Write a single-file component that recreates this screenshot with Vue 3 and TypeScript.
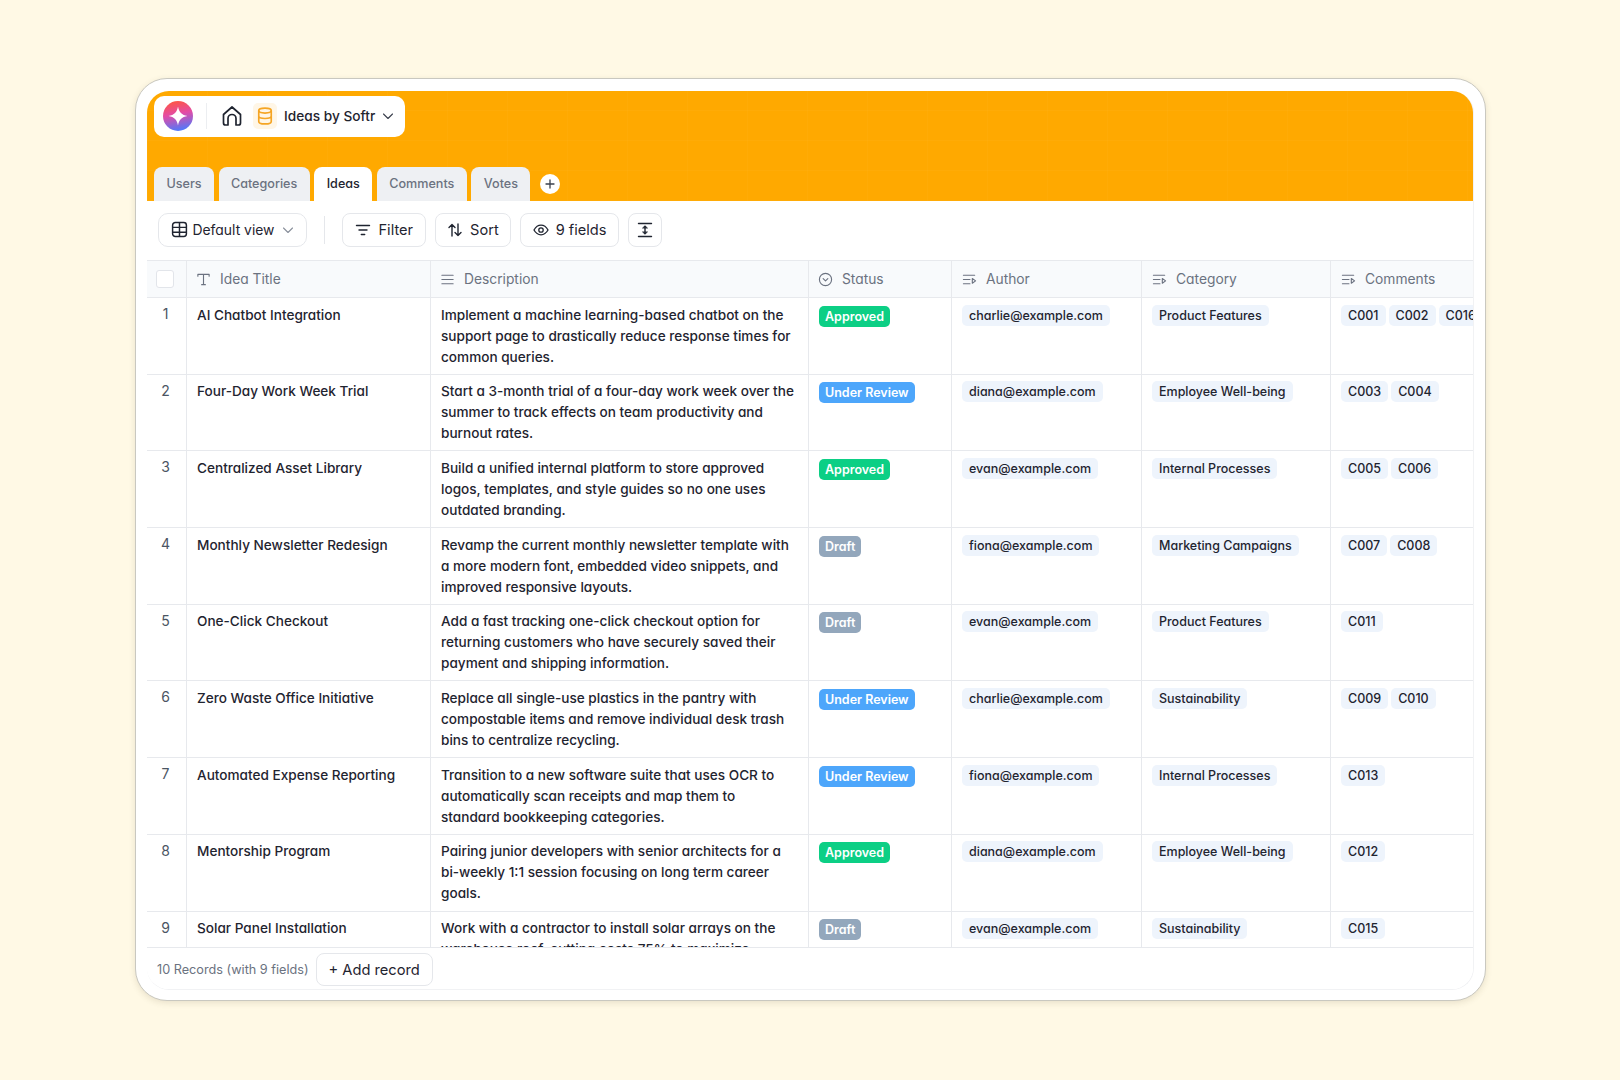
<script setup lang="ts">
interface Idea {
  title: string
  desc: string
  status: 'Approved' | 'Under Review' | 'Draft'
  author: string
  category: string
  comments: string[]
}

const tabs = ['Users', 'Categories', 'Ideas', 'Comments', 'Votes']

const ideas: Idea[] = [
  { title: 'AI Chatbot Integration', desc: 'Implement a machine learning-based chatbot on the support page to drastically reduce response times for common queries.', status: 'Approved', author: 'charlie@example.com', category: 'Product Features', comments: ['C001', 'C002', 'C016'] },
  { title: 'Four-Day Work Week Trial', desc: 'Start a 3-month trial of a four-day work week over the summer to track effects on team productivity and burnout rates.', status: 'Under Review', author: 'diana@example.com', category: 'Employee Well-being', comments: ['C003', 'C004'] },
  { title: 'Centralized Asset Library', desc: 'Build a unified internal platform to store approved logos, templates, and style guides so no one uses outdated branding.', status: 'Approved', author: 'evan@example.com', category: 'Internal Processes', comments: ['C005', 'C006'] },
  { title: 'Monthly Newsletter Redesign', desc: 'Revamp the current monthly newsletter template with a more modern font, embedded video snippets, and improved responsive layouts.', status: 'Draft', author: 'fiona@example.com', category: 'Marketing Campaigns', comments: ['C007', 'C008'] },
  { title: 'One-Click Checkout', desc: 'Add a fast tracking one-click checkout option for returning customers who have securely saved their payment and shipping information.', status: 'Draft', author: 'evan@example.com', category: 'Product Features', comments: ['C011'] },
  { title: 'Zero Waste Office Initiative', desc: 'Replace all single-use plastics in the pantry with compostable items and remove individual desk trash bins to centralize recycling.', status: 'Under Review', author: 'charlie@example.com', category: 'Sustainability', comments: ['C009', 'C010'] },
  { title: 'Automated Expense Reporting', desc: 'Transition to a new software suite that uses OCR to automatically scan receipts and map them to standard bookkeeping categories.', status: 'Under Review', author: 'fiona@example.com', category: 'Internal Processes', comments: ['C013'] },
  { title: 'Mentorship Program', desc: 'Pairing junior developers with senior architects for a bi-weekly 1:1 session focusing on long term career goals.', status: 'Approved', author: 'diana@example.com', category: 'Employee Well-being', comments: ['C012'] },
  { title: 'Solar Panel Installation', desc: 'Work with a contractor to install solar arrays on the warehouse roof, cutting costs 75% to maximize energy.', status: 'Draft', author: 'evan@example.com', category: 'Sustainability', comments: ['C015'] },
]

const statusClass = (s: Idea['status']) => 'status--' + s.split(' ')[0].toLowerCase()
</script>

<template>
  <div class="page">
    <div class="frame">
      <div class="app">
        <header class="banner">
          <div class="pill">
            <svg class="logo" viewBox="0 0 30 30" width="30" height="30">
              <defs>
                <linearGradient id="lg" x1="0.3" y1="0" x2="0.5" y2="1">
                  <stop offset="0" stop-color="#ff5640" />
                  <stop offset="0.45" stop-color="#e34ca6" />
                  <stop offset="1" stop-color="#4f79fb" />
                </linearGradient>
              </defs>
              <circle cx="15" cy="15" r="15" fill="url(#lg)" />
              <path d="M15 5.500c1 5.800 3.700 8.500 9.500 9.500-5.800 1-8.500 3.700-9.500 9.500-1-5.800-3.700-8.500-9.500-9.500 5.800-1 8.500-3.700 9.500-9.500z" fill="#fff" />
            </svg>
            <span class="pill-sep"></span>
            <svg class="home" viewBox="0 0 24 24" width="24" height="24" fill="none" stroke="#1f2430" stroke-width="1.700" stroke-linecap="round" stroke-linejoin="round">
              <path d="M3.500 10.500 12 3l8.500 7.500V19a2 2 0 0 1-2 2H16v-6.500a4 4 0 0 0-8 0V21H5.500a2 2 0 0 1-2-2z" />
            </svg>
            <span class="db-box">
              <svg viewBox="0 0 24 24" width="20" height="20" fill="none" stroke="#f5a524" stroke-width="2">
                <ellipse cx="12" cy="5.500" rx="7.500" ry="3" />
                <path d="M4.500 5.500v13c0 1.700 3.400 3 7.500 3s7.500-1.300 7.500-3v-13M4.500 12c0 1.700 3.400 3 7.500 3s7.500-1.300 7.500-3" />
              </svg>
            </span>
            <span class="pill-title">Ideas by Softr</span>
            <svg class="chev" viewBox="0 0 12 12" width="12" height="12" fill="none" stroke="#3a404d" stroke-width="1.100" stroke-linecap="round" stroke-linejoin="round"><path d="m1.500 4 4.500 4.500L10.500 4" /></svg>
          </div>
          <nav class="tabs">
            <span v-for="t in tabs" :key="t" class="tab" :class="{ 'tab--active': t === 'Ideas' }">{{ t }}</span>
            <span class="tab-add">
              <svg viewBox="0 0 10 10" width="10" height="10" fill="none" stroke="#3a404d" stroke-width="1.300" stroke-linecap="round"><path d="M5 1v8M1 5h8" /></svg>
            </span>
          </nav>
        </header>

        <div class="toolbar">
          <button class="btn btn--view">
            <svg viewBox="0 0 16 16" width="17" height="17" fill="none" stroke="#1f2430" stroke-width="1.400"><rect x="1.500" y="1.500" width="13" height="13" rx="2.500" /><path d="M1.500 6h13M1.500 10.500h13M8 1.500v13" /></svg>
            <span>Default view</span>
            <svg class="btn-chev" viewBox="0 0 12 12" width="12" height="12" fill="none" stroke="#8a909c" stroke-width="1.100" stroke-linecap="round" stroke-linejoin="round"><path d="m1.500 4 4.500 4.500L10.500 4" /></svg>
          </button>
          <span class="tool-sep"></span>
          <button class="btn btn--lg btn--filter">
            <svg viewBox="0 0 16 16" width="16" height="16" fill="none" stroke="#1f2430" stroke-width="1.400" stroke-linecap="round"><path d="M1.500 3.500h13M4 8h8M6.300 12.500h3.400" /></svg>
            <span>Filter</span>
          </button>
          <button class="btn btn--lg">
            <svg viewBox="0 0 16 16" width="16" height="16" fill="none" stroke="#1f2430" stroke-width="1.400" stroke-linecap="round" stroke-linejoin="round"><path d="M5 14V2.500M2 5.500l3-3 3 3M11 2v11.500M8 10.500l3 3 3-3" /></svg>
            <span>Sort</span>
          </button>
          <button class="btn btn--lg">
            <svg viewBox="0 0 16 16" width="16" height="16" fill="none" stroke="#1f2430" stroke-width="1.300"><path d="M1 8s2.700-4.800 7-4.800S15 8 15 8s-2.700 4.800-7 4.800S1 8 1 8z" /><circle cx="8" cy="8" r="2.200" /></svg>
            <span>9 fields</span>
          </button>
          <button class="btn btn--icon">
            <svg viewBox="0 0 16 16" width="16" height="16" fill="none" stroke="#1f2430" stroke-width="1.400" stroke-linecap="round" stroke-linejoin="round"><path d="M1.500 1.500h13M1.500 14.500h13M8 4.500v7" /><path d="M5.800 5.800 8 3.800l2.200 2zM5.800 10.200 8 12.200l2.200-2z" fill="#1f2430" stroke-width="0.800" /></svg>
          </button>
        </div>

        <div class="table-wrap">
          <div class="row row--head">
            <div class="hcell hcell--check"><span class="checkbox"></span></div>
            <div class="hcell">
              <svg viewBox="0 0 16 16" width="15" height="15" fill="none" stroke="#6b7280" stroke-width="1.200" stroke-linecap="round" stroke-linejoin="round"><path d="M2 4.500V2.500h12v2M8 2.500v11M6 13.500h4" /></svg>
              Idea Title
            </div>
            <div class="hcell">
              <svg viewBox="0 0 16 16" width="15" height="15" fill="none" stroke="#6b7280" stroke-width="1.200" stroke-linecap="round"><path d="M2 3.500h12M2 8h12M2 12.500h12" /></svg>
              Description
            </div>
            <div class="hcell">
              <svg viewBox="0 0 16 16" width="15" height="15" fill="none" stroke="#6b7280" stroke-width="1.200" stroke-linecap="round" stroke-linejoin="round"><circle cx="8" cy="8" r="6.500" /><path d="m5.500 7 2.500 2.500L10.500 7" /></svg>
              Status
            </div>
            <div v-for="h in ['Author', 'Category', 'Comments']" :key="h" class="hcell">
              <svg viewBox="0 0 16 16" width="15" height="15" fill="none" stroke="#6b7280" stroke-width="1.200" stroke-linecap="round" stroke-linejoin="round"><path d="M1.500 3.500h12M1.500 8h7M1.500 12.500h7M11 7l3.500 2.500L11 12z" /></svg>
              {{ h }}
            </div>
          </div>
          <div v-for="(row, i) in ideas" :key="row.title" class="row">
            <div class="cell cell--num">{{ i + 1 }}</div>
            <div class="cell">{{ row.title }}</div>
            <div class="cell cell--desc">{{ row.desc }}</div>
            <div class="cell"><span class="status" :class="statusClass(row.status)">{{ row.status }}</span></div>
            <div class="cell"><span class="chip">{{ row.author }}</span></div>
            <div class="cell"><span class="chip">{{ row.category }}</span></div>
            <div class="cell cell--comments"><span v-for="c in row.comments" :key="c" class="chip">{{ c }}</span></div>
          </div>
        </div>

        <footer class="foot">
          <span class="foot-count">10 Records (with 9 fields)</span>
          <button class="btn btn--add">+ Add record</button>
        </footer>
      </div>
    </div>
  </div>
</template>

<style>
html,
body {
  margin: 0;
  background: #fff9e5;
}
</style>

<style scoped>
.page {
  box-sizing: border-box;
  width: 1620px;
  height: 1080px;
  padding: 78px 134px 0 135px;
  background: #fff9e5;
  font-family: Inter, "Liberation Sans", sans-serif;
  font-feature-settings: "cv11" 1;
  color: #1f2430;
}

.frame {
  box-sizing: border-box;
  height: 923px;
  padding: 12px 11px 11px 11px;
  background: #fff;
  border: 1px solid #c9c8c0;
  border-radius: 32px;
  box-shadow: 0 2px 6px rgba(90, 80, 40, 0.14);
}

.app {
  display: flex;
  flex-direction: column;
  height: 100%;
  overflow: hidden;
  border-radius: 22px;
  border-bottom: 1px solid #f1f2f4;
  border-right: 1px solid #f1f2f4;
}

.banner {
  flex: none;
  box-sizing: border-box;
  height: 110px;
  padding: 5px 6px 0 7px;
  display: flex;
  flex-direction: column;
  justify-content: space-between;
  background-color: #ffa900;
  background-image:
    repeating-linear-gradient(90deg, rgba(255, 255, 255, 0.025) 0 1px, transparent 1px 60px),
    repeating-linear-gradient(0deg, rgba(255, 255, 255, 0.025) 0 1px, transparent 1px 30px);
}

.pill {
  display: flex;
  align-items: center;
  width: 251px;
  height: 41px;
  box-sizing: border-box;
  padding-left: 9px;
  padding-bottom: 1px;
  background: #fff;
  border-radius: 10px;
}

.pill-sep {
  width: 1px;
  height: 26px;
  margin: 0 13px;
  background: #eceef1;
}

.home {
  margin-right: 9px;
}

.db-box {
  display: flex;
  align-items: center;
  justify-content: center;
  width: 24px;
  height: 26px;
  border-radius: 5px;
  background: #fff6e6;
}

.pill-title {
  margin: 0 7px 0 7px;
  font-size: 13.700px;
  font-weight: 500;
}

.tabs {
  display: flex;
  align-items: center;
  gap: 4.600px;
}

.tab {
  height: 34px;
  line-height: 33px;
  padding: 0 12.400px;
  border-radius: 8px 8px 0 0;
  background: #eef0f3;
  color: #6b7280;
  font-size: 12.600px;
  font-weight: 500;
}

.tab--active {
  background: #fff;
  color: #1f2430;
}

.tab-add {
  display: flex;
  align-items: center;
  justify-content: center;
  width: 20px;
  height: 20px;
  margin-left: 5px;
  border-radius: 50%;
  background: #fff;
}

.toolbar {
  flex: none;
  box-sizing: border-box;
  height: 59px;
  padding: 12px 0 0 11px;
  display: flex;
  align-items: flex-start;
  gap: 9px;
  background: #fff;
}

.btn {
  display: inline-flex;
  align-items: center;
  justify-content: center;
  box-sizing: border-box;
  height: 34px;
  padding: 0;
  background: #fff;
  border: 1px solid #e5e7eb;
  border-radius: 8px;
  color: #1f2430;
  font: inherit;
  font-weight: 500;
}

.btn--view {
  width: 149px;
  gap: 5px;
  padding-bottom: 1px;
  border-radius: 10px;
  font-size: 13.900px;
  font-weight: 400;
}

.btn-chev {
  margin-left: 3px;
}

.tool-sep {
  width: 1px;
  height: 28px;
  margin: 3px 8px 0 8px;
  background: #e5e7eb;
}

.btn--lg {
  gap: 7px;
  padding: 0 11.500px;
  font-size: 14.600px;
  font-weight: 400;
}

.btn--filter {
  gap: 8px;
}

.btn--icon {
  width: 34px;
}

.table-wrap {
  flex: 1;
  min-height: 0;
  overflow: hidden;
}

.row {
  display: grid;
  grid-template-columns: 40px 244px 378px 143px 190px 189px 240px;
  width: 1424px;
  height: 76.700px;
}

.row--head {
  height: 38px;
}

.hcell {
  box-sizing: border-box;
  display: flex;
  align-items: center;
  gap: 9px;
  padding: 0 0 0 10px;
  background: #f8fafc;
  border-top: 1px solid #e7e9ed;
  border-bottom: 1px solid #e7e9ed;
  border-right: 1px solid #e7e9ed;
  color: #6b7280;
  font-size: 13.800px;
}

.hcell:nth-child(-n + 4) {
  padding-left: 9px;
}

.checkbox {
  display: block;
  width: 16px;
  height: 16px;
  background: #fff;
  border: 1px solid #e2e5ea;
  border-radius: 3px;
}

.cell {
  box-sizing: border-box;
  padding: 6.600px 10px 0;
  border-bottom: 1px solid #e7e9ed;
  border-right: 1px solid #e7e9ed;
  line-height: 21px;
  font-size: 13.600px;
  font-weight: 500;
}

.cell--num {
  padding: 5px 2px 0 0;
  color: #4b5563;
  font-size: 14px;
  font-weight: 400;
  text-align: center;
}

.cell--desc {
  padding-right: 12px;
}

.status {
  display: inline-block;
  height: 21px;
  margin-top: 1px;
  padding: 0 6px;
  border-radius: 5px;
  color: #fff;
  font-size: 12.500px;
  font-weight: 600;
  line-height: 21px;
  vertical-align: top;
}

.status--approved {
  background: #0ccf85;
}

.status--under {
  background: #4da6fb;
}

.status--draft {
  background: #93a7bc;
}

.chip {
  display: inline-block;
  height: 21px;
  padding: 0 7px;
  border-radius: 5px;
  background: #eef4fc;
  font-size: 12.500px;
  font-weight: 500;
  line-height: 21px;
  vertical-align: top;
}

.cell--comments {
  white-space: nowrap;
}

.cell--comments .chip + .chip {
  margin-left: 3px;
}

.foot {
  flex: none;
  box-sizing: border-box;
  height: 42px;
  padding: 2px 0 0 10px;
  display: flex;
  align-items: center;
  gap: 7px;
  border-top: 1px solid #e7e9ed;
  background: #fff;
}

.foot-count {
  color: #6b7280;
  font-size: 12.700px;
}

.btn--add {
  width: 117px;
  height: 33px;
  font-size: 14.700px;
  font-weight: 400;
}
</style>
